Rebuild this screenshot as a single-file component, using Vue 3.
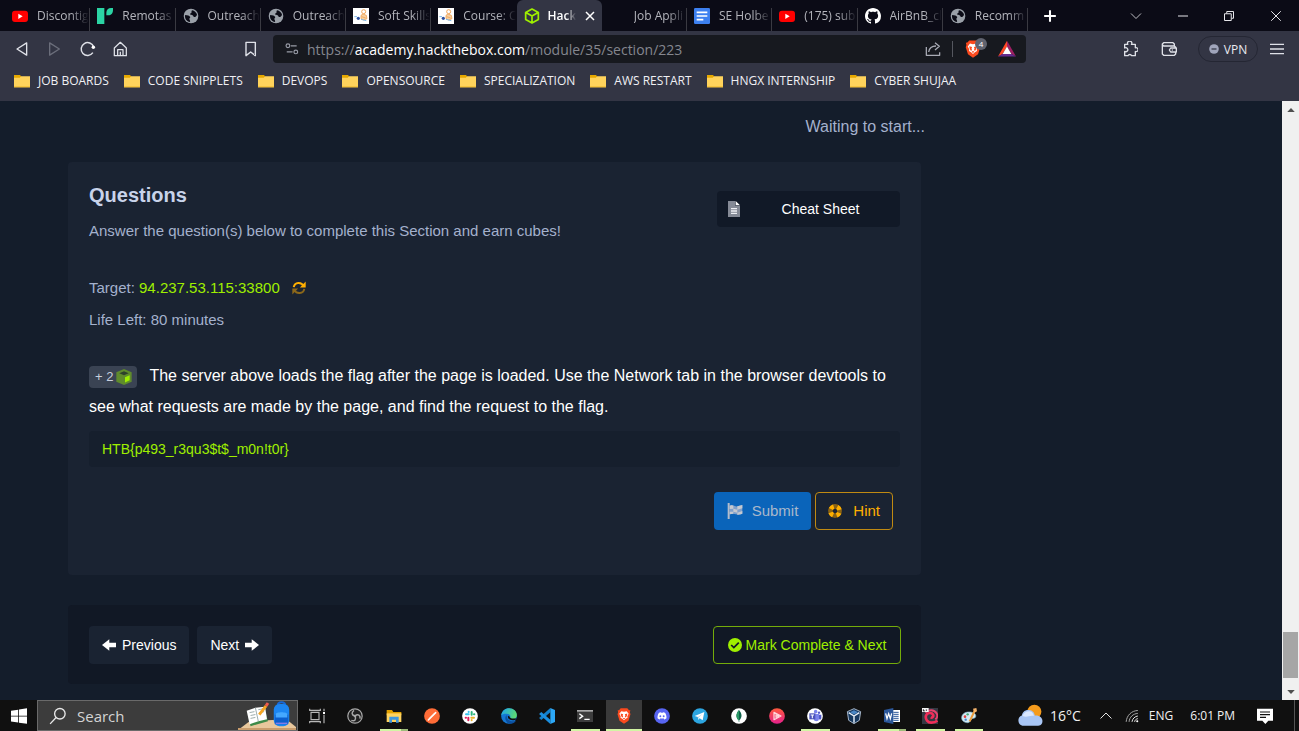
<script setup>
import { ref } from 'vue'

const tabs = [
  { icon: 'youtube', title: 'Discontig' },
  { icon: 'remotask', title: 'Remotas' },
  { icon: 'globe', title: 'Outreach' },
  { icon: 'globe', title: 'Outreach' },
  { icon: 'course', title: 'Soft Skills' },
  { icon: 'course', title: 'Course: C' },
  { icon: 'htb', title: 'Hack', active: true },
  { icon: '', title: 'Job Appli' },
  { icon: 'docs', title: 'SE Holbe' },
  { icon: 'youtube', title: '(175) sub' },
  { icon: 'github', title: 'AirBnB_cl' },
  { icon: 'globe', title: 'Recomm' }
]

const bookmarks = [
  'JOB BOARDS',
  'CODE SNIPPLETS',
  'DEVOPS',
  'OPENSOURCE',
  'SPECIALIZATION',
  'AWS RESTART',
  'HNGX INTERNSHIP',
  'CYBER SHUJAA'
]

const apps = [
  { name: 'Task View', icon: 'taskview' },
  { name: 'OBS', icon: 'obs' },
  { name: 'File Explorer', icon: 'explorer', open: true, stacked: true },
  { name: 'Postman', icon: 'postman' },
  { name: 'Slack', icon: 'slack' },
  { name: 'Edge', icon: 'edge' },
  { name: 'VS Code', icon: 'vscode' },
  { name: 'Terminal', icon: 'terminal', open: true },
  { name: 'Brave', icon: 'brave', open: true, focused: true },
  { name: 'Discord', icon: 'discord' },
  { name: 'Telegram', icon: 'telegram' },
  { name: 'MongoDB', icon: 'mongo' },
  { name: 'Player', icon: 'player' },
  { name: 'Teams', icon: 'teams', open: true },
  { name: 'VirtualBox', icon: 'vbox' },
  { name: 'Word', icon: 'word', open: true, stacked: true },
  { name: 'Debian', icon: 'debian', open: true },
  { name: 'Paint', icon: 'paint', open: true }
]

const flag = ref('HTB{p493_r3qu3$t$_m0n!t0r}')

// Every drawing sits on a 24 by 24 grid.
const icons = {
  youtube: '<rect y="4" width="24" height="17" rx="4.500" fill="#f00"/><path fill="#fff" d="M9.500 8.500v8l6.500-4z"/>',
  remotask: '<path fill="#2bd4a4" d="M0 0h11v24H0zM14 11V7c0-4 3-7 7-7h3v3c0 5-3 8-7 8z"/>',
  globe: '<circle cx="12" cy="12" r="11" fill="#9aa0a8"/><path fill="#0b0b16" d="M3.200 10.500c3.500.3 7 1.200 7.600 3 .5 1.500-1.600 1.700-1.200 3.500.2 1.500 1.400 1.400 1 4-5-.8-8.500-5-7.400-10.500zM13.500 3.200c4 .5 7 3.600 7.600 7.300-1.500 2-2.500 3.400-4.300 3-1.500-.3-1-2-2.400-2.600-1.600-.6-3 .2-3.600-1.500-.5-1.500 1.500-1.500 2-2.600.4-1-.6-2 .7-3.600z"/>',
  course: '<path fill="#fff" d="M0 0h24v24H0z"/><circle cx="16" cy="5.500" r="3" fill="none" stroke="#f2a65a" stroke-width="1.500"/><path d="M12 11l3-2 5 2 1 5-5 2-4-2zM13 13l6 2" fill="#f7d0a0" stroke="#f0a050" stroke-width="1.200"/><circle cx="8" cy="15.500" r="2.400" fill="#2c4f9e"/><path stroke="#7db8e8" stroke-width="1.500" d="M2 13h4M12 17l8 2"/>',
  htb: '<path fill="none" stroke="#9fef00" stroke-width="2.600" stroke-linejoin="round" d="M12 1.500l9.500 5.200v10.600L12 22.500l-9.500-5.200V6.700zM3.500 7.200L12 12l8.500-4.800M12 12v10"/>',
  docs: '<rect width="24" height="24" rx="2" fill="#3d80f0"/><path stroke="#fff" stroke-width="2.600" d="M4 6.500h16M4 12h16M4 17.500h10"/>',
  github: '<g transform="scale(1.500)"><path fill="#fff" d="M8 0C3.580 0 0 3.580 0 8c0 3.540 2.290 6.530 5.470 7.590.4.070.55-.17.55-.38 0-.19-.01-.82-.01-1.490-2.010.37-2.530-.49-2.690-.94-.09-.23-.48-.94-.82-1.130-.28-.15-.68-.52-.01-.53.63-.01 1.080.58 1.230.82.72 1.210 1.870.87 2.330.66.070-.52.28-.87.51-1.070-1.780-.2-3.640-.89-3.640-3.950 0-.87.31-1.590.82-2.150-.08-.2-.36-1.020.08-2.120 0 0 .67-.21 2.200.82.64-.18 1.320-.27 2-.27s1.360.09 2 .27c1.530-1.040 2.200-.82 2.200-.82.44 1.100.16 1.920.08 2.120.51.56.82 1.270.82 2.150 0 3.070-1.870 3.750-3.650 3.950.29.25.54.73.54 1.480 0 1.070-.01 1.930-.01 2.200 0 .21.15.46.55.38A8.010 8.010 0 0 0 16 8c0-4.420-3.580-8-8-8z"/></g>',
  close: '<path stroke="#fff" stroke-width="3" d="M4 4l16 16M20 4L4 20"/>',
  plus: '<path stroke="#fff" stroke-width="3.500" d="M12 2v20M2 12h20"/>',
  chevronDown: '<path fill="none" stroke="#d0d0d6" stroke-width="1.800" d="M2 7l10 10L22 7"/>',
  minimize: '<path stroke="#e6e6ea" stroke-width="2" d="M2 12h20"/>',
  restore: '<path fill="none" stroke="#e6e6ea" stroke-width="2" d="M3 7.500h13.500V21H3zM7.500 7V3H21v13.500h-4"/>',
  windowClose: '<path stroke="#e6e6ea" stroke-width="2" d="M2.500 2.500l19 19M21.500 2.500l-19 19"/>',
  back: '<path fill="none" stroke="#dfe1e8" stroke-width="2" stroke-linejoin="round" d="M4.500 12L19 2.800v18.400z"/>',
  forward: '<path fill="none" stroke="#6b6e7b" stroke-width="2" stroke-linejoin="round" d="M18.500 12L4 2.800v18.400z"/>',
  reload: '<path fill="none" stroke="#dfe1e8" stroke-width="2.200" d="M19.300 17.500A9.600 9.600 0 1 1 20.500 9"/><circle cx="20" cy="9.500" r="2.600" fill="#fff"/>',
  home: '<path fill="none" stroke="#dfe1e8" stroke-width="1.900" stroke-linejoin="round" d="M2 10.500l9-8.500 9 8.500V22H2zM7 22v-9h8v9M11 22v-6"/>',
  bookmark: '<path fill="none" stroke="#dfe1e8" stroke-width="2.100" stroke-linejoin="round" d="M4.500 2h14v20l-7-5.500-7 5.500z"/>',
  tune: '<g fill="none" stroke="#9a9da8" stroke-width="2"><circle cx="5" cy="6.500" r="3.200"/><path d="M10 6.500h10M3 17h10"/><circle cx="18.500" cy="17" r="3.200"/></g>',
  share: '<path fill="none" stroke="#a9abb5" stroke-width="1.900" stroke-linejoin="round" d="M2 9v12.500h20V17M5.500 16.500c1-6 5-9 11-9M15 2.500l6.500 5.500-6.500 5.500"/>',
  brave: '<path fill="#fb4a1e" d="M7 .5h10l2.500 2.800 2 .2-.7 3 .9 3-3 9.500L12 23.700 5.300 19l-3-9.500.9-3-.7-3 2-.2z"/><path fill="#fff" d="M8 4.800l4 .8 4-.8 3 3.700-2 3.700.3 2.300-2.800 1.800L12 18.500l-2.500-2.200-2.800-1.800.3-2.300-2-3.700z"/><path fill="#fb4a1e" d="M7 8.300l3.700.9-.7 2.300.9 2-1.900.7-1.400-2.500zM17 8.300l-3.700.9.7 2.300-.9 2 1.900.7 1.400-2.500zM12 14.700l1.800 1-1.800 1.500-1.800-1.500z"/>',
  bat: '<path fill="#ff4724" d="M12 1v8L6 18.500 0 22z"/><path fill="#9e1f63" d="M12 1l12 21-6-3.500L12 9z"/><path fill="#662d91" d="M0 22h24l-6-3.500H6z"/><path fill="#fff" d="M12 8.500l5.800 10H6.200z"/>',
  puzzle: '<path fill="none" stroke="#dfe1e8" stroke-width="2" stroke-linejoin="round" d="M4 5h4.800a3.200 3.200 0 1 1 5.400 0H20v5.200a3 3 0 1 1 0 5.600V22h-5.500a3 3 0 0 0-5.500 0H4v-6.500a3 3 0 1 0 0-5z"/>',
  wallet: '<path fill="none" stroke="#dfe1e8" stroke-width="2" stroke-linejoin="round" d="M20 7.500V4.500L18 2.500H4L2 4.500v15l2 2h16l2-2V17M2 5.500l2 2h16l2 2v1M14.500 10.500H23v6h-8.500l-2-3z"/><circle cx="17" cy="13.500" r="1" fill="#dfe1e8"/>',
  vpn: '<circle cx="12" cy="12" r="11.500" fill="#a0a5bb"/><path stroke="#333544" stroke-width="3" d="M6 12h12"/>',
  menu: '<path stroke="#dfe1e8" stroke-width="2.200" d="M0 4h24M0 12h24M0 20h24"/>',
  folder: '<path fill="#e6a800" d="M0 3h9l2.500 3H23v4H0z"/><path fill="#ffd35c" d="M0 7h8.500L11 5h13v16.500H0z"/><path fill="#f2bd30" d="M0 20h24v1.500H0z"/>',
  sheet: '<path fill="#858a96" d="M3 0h11v7h7v17H3z"/><path fill="#fff" d="M14.500 0L21 6.500h-6.500z"/><path stroke="#eef0f4" stroke-width="2" d="M7.500 11.500h9M7.500 15h9M7.500 18.500h9"/>',
  sync: '<path fill="none" stroke="#ffaf00" stroke-width="3.400" d="M3 10.500C4.500 1.500 16 1 20 8.500"/><path fill="#ffaf00" d="M23.500 1v10h-10z"/><path fill="none" stroke="#8c681a" stroke-width="3.400" d="M21 13.500C19.500 22.500 8 23 4 15.500"/><path fill="#8c681a" d="M.5 23V13h10z"/>',
  cube: '<path fill="#5f8b2c" d="M12 0l11.500 5v14L12 24 .5 19V5z"/><path fill="#2d412c" d="M12 3.500l7 2.800-7 2.900-7-2.900z"/><path fill="#9fef00" d="M13.500 12.500l7-3.200v7.500l-7 3.600z"/>',
  flag: '<path fill="#b4bccb" d="M1 0h3v24H1z"/><path fill="#7fa0cb" d="M4 4c4-3 8 2 12 1l7-2v13c-7 4-11-2-19 1z"/><path fill="#c5c9d0" d="M4 4c2-1 4-1 5.500 0v4.500L4 9zM9.500 8.500l6 1.500v4.500l-6-1.500zM15.500 5L23 3v5l-7.500 2zM4 13l5.500.2V16L4 17zM15.500 14.500L23 12v4l-7.500 2z"/>',
  ring: '<circle cx="12" cy="12" r="7.900" fill="none" stroke="#896214" stroke-width="7.800"/><circle cx="12" cy="12" r="7.900" fill="none" stroke="#ffaf00" stroke-width="7.800" stroke-dasharray="6.200 6.210" transform="rotate(22.500 12 12)"/>',
  left: '<path fill="#fff" d="M12.500 2v6H24v8H12.500v6L0 12z"/>',
  right: '<path fill="#fff" d="M11.500 2v6H0v8h11.500v6L24 12z"/>',
  check: '<circle cx="12" cy="12" r="12" fill="#9fef00"/><path fill="none" stroke="#111825" stroke-width="3" d="M5.500 12l4.500 4.500L18.500 8"/>',
  arrowUp: '<path fill="#505050" d="M12 7l9 10H3z"/>',
  arrowDown: '<path fill="#505050" d="M12 17l9-10H3z"/>',
  windows: '<path fill="#fff" d="M0 4l10.800-1.500v9H0zM12 2.300L24 .5v11H12zM0 12.700h10.800v9L0 20.200zM12 12.700h12v11l-12-1.700z"/>',
  search: '<circle cx="14.500" cy="9" r="7" fill="none" stroke="#e8e8e8" stroke-width="1.800"/><path stroke="#e8e8e8" stroke-width="1.800" d="M9.500 14L1.500 22.500"/>',
  taskview: '<g fill="none" stroke="#b8b8b8" stroke-width="1.700"><path d="M3 6.500h12v11H3zM1 1v2.500h16V1M1 23v-2.500h16V23M22.500 1v4M22.500 10v13"/></g><path fill="#fff" d="M21 6h3v3h-3z"/>',
  obs: '<circle cx="12" cy="12" r="10.800" fill="#202020" stroke="#a9a9a9" stroke-width="1.800"/><circle cx="12" cy="12" r="2" fill="#a9a9a9"/><path fill="none" stroke="#a9a9a9" stroke-width="2.200" d="M10.500 3.500c-4 3-4 7 1.500 8.500M19.500 16c1-5-3-8-7.500-4M6.500 18.500c5 2 8-1.500 5.500-6.500"/>',
  explorer: '<path fill="#e2a100" d="M1 3h8l2 3h12v5H1z"/><path fill="#ffd35f" d="M1 8h22v13H1z"/><path fill="#3e97df" d="M5 13h14v9h-4v-4.500H9V22H5z"/>',
  postman: '<circle cx="12" cy="12" r="11.800" fill="#ff6c37"/><path stroke="#fff" stroke-width="2.400" stroke-linecap="round" d="M6.500 18L17.500 7"/><path stroke="#ffd1bf" d="M7 15.500L15 8"/>',
  slack: '<circle cx="12" cy="12" r="11.800" fill="#fff"/><g stroke-width="3" stroke-linecap="round"><path stroke="#36c5f0" d="M6 9.500h4M10 5.500v.5"/><path stroke="#2eb67d" d="M14.500 6v4M18 9.500h.5"/><path stroke="#ecb22e" d="M14 14.500h4M14.500 18v.5"/><path stroke="#e01e5a" d="M9.500 14.500v4M5.500 14.500H6"/></g>',
  edge: '<defs><linearGradient id="edgeTop" x1="0" x2="1" y1=".3" y2=".6"><stop stop-color="#1fa8e8"/><stop offset="1" stop-color="#5fdc6c"/></linearGradient></defs><circle cx="12" cy="12" r="11.800" fill="#1477d4"/><path fill="url(#edgeTop)" d="M.3 11C1.500 4 6.500.2 12.200.2 19 .2 23.800 5 23.800 10.500c0 4-2.800 6-6 6-3 0-4.500-1-4-2.500.5-1 .5-4-3-5C7 8 2.500 8.500.3 11z"/><path fill="#0c4f9e" d="M8.500 10.500c-3.500 3-2.500 10.500 3.500 13 5 .8 8.500-1.500 10.500-4.500-6 2.500-15 0-14-8.500z"/><path fill="#111" d="M10.500 11.500c-1.200 4 2.500 7.500 9 6.800 2-.3 3-1.300 4-2.300 0-1-6 1-9-1-1.800-1.200-.7-2.500-4-3.500z"/>',
  vscode: '<path fill="#1380cc" d="M17 0v6.500L3.500 18 .5 15.500v-1z"/><path fill="#1b8fe0" d="M17 24v-6.500L3.500 6 .5 8.500v1z"/><path fill="#2ca8f7" d="M17 0l7 3v18l-7 3z"/>',
  terminal: '<path fill="#3d3d3d" d="M0 3h24v18H0z"/><path fill="#aaa" d="M0 3h24v2.500H0z"/><path fill="none" stroke="#fff" stroke-width="2" d="M3.500 8.500l5 3.700-5 3.700M11 17h8"/>',
  discord: '<circle cx="12" cy="12" r="11.800" fill="#5865f2"/><path fill="#fff" d="M7.500 7.200L10.300 6.300l.7 1h2l.7-1 2.800.9c1.800 2.500 2.500 5.500 2.200 8.200-1 .9-2.300 1.400-3.400 1.700l-1-1.700c-1.500.4-3.100.4-4.600 0l-1 1.700c-1.100-.3-2.400-.8-3.400-1.700-.3-2.700.4-5.700 2.200-8.200z"/><ellipse cx="9.500" cy="12.300" rx="1.400" ry="1.600" fill="#5865f2"/><ellipse cx="14.500" cy="12.300" rx="1.400" ry="1.600" fill="#5865f2"/>',
  telegram: '<circle cx="12" cy="12" r="11.800" fill="#2ca5e0"/><path fill="#fff" d="M4 12l14.500-6-2.500 12.500-4.500-3.200-2.200 2.300-.5-4z"/><path fill="#b8d8ea" d="M8.700 13.600L15.500 9l-4.800 5-1.400 3.500z"/>',
  mongo: '<circle cx="12" cy="12" r="11.800" fill="#fff"/><path fill="#10634b" d="M12 3c5 5.500 5 11.500.4 15.500V21h-.8v-2.500C7 14.500 7 8.500 12 3z"/><path fill="#2c9a67" d="M12 3v16C7 15 7 8.500 12 3z"/>',
  player: '<defs><linearGradient id="playerFill" x2="0" y2="1"><stop stop-color="#ff5a3c"/><stop offset="1" stop-color="#e4208c"/></linearGradient></defs><circle cx="12" cy="12" r="11.800" fill="url(#playerFill)"/><path fill="none" stroke="#ffd7dd" stroke-width="1.800" stroke-linejoin="round" d="M7.500 6.500v11L18 12zM10.500 10v4l4-2z"/>',
  teams: '<circle cx="12" cy="12" r="11.800" fill="#fff"/><circle cx="13" cy="5.500" r="2.700" fill="#7b83eb"/><circle cx="18" cy="7" r="1.800" fill="#5059c9"/><path fill="#7b83eb" d="M10 9h8v7c0 5-8 5-8 0z"/><path fill="#5059c9" d="M18 10h3.500v5c0 3-3.500 3-3.500 1z"/><path fill="#4b53bc" d="M3.500 8h9v9h-9z"/><path stroke="#fff" stroke-width="1.600" d="M5.500 10.500h5M8 10.500v5"/>',
  vbox: '<path fill="#17395f" stroke="#b9cbe0" stroke-width="1.300" d="M12 1l10 4.500-2 13L12 23.500 4 18.500 2 5.500z"/><path fill="none" stroke="#e6eef8" stroke-width="2.200" d="M4 7l8 5 8-5M12 12v10"/><path fill="#4a86c4" d="M12 3.500l6 2.700-6 3.500-6-3.500z"/>',
  word: '<path fill="#fff" d="M12 3h12v18H12z"/><path stroke="#2b579a" stroke-width="1.500" d="M14 6.500h8M14 9.500h8M14 12.500h8M14 15.500h8M14 18.500h8"/><path fill="#2b579a" d="M0 3l14-3v24L0 21z"/><path fill="none" stroke="#fff" stroke-width="1.900" d="M2.500 8l2 8L7 8.500 9.500 16l2-8"/>',
  debian: '<path fill="#343843" d="M0 0h24v24H0z"/><path fill="none" stroke="#f02d58" stroke-width="4" d="M13 14c2 1 5-1 3.500-4-2-4-9-3-10.500 1.500C4.500 17 9 22 14 22c4 0 7-1 9-3"/><path fill="none" stroke="#e9426c" stroke-width="3" d="M5 7c5-5 13-5 17 1 1.500 3 1 7-2 9"/><path fill="#f4f4f4" d="M0 0h10v6H0z"/><path stroke="#333" stroke-width="1.300" d="M2 2v2.500h2M6.500 2v2.500"/>',
  paint: '<path fill="#d7ecf5" stroke="#81b6cd" d="M12 6c6 0 11 2.500 10 7-.8 3-4 1.800-6 3.500-2 1.500-2 5.500-6 5.500-5 0-9.500-3-9-8 .4-5 5-8 11-8z"/><circle cx="6" cy="13" r="2" fill="#d44"/><circle cx="10" cy="9.500" r="1.800" fill="#4a7"/><circle cx="7" cy="17.500" r="1.800" fill="#48c"/><path stroke="#eb9c3c" stroke-width="3" d="M21 3l-8 17"/><path fill="#f5b46c" d="M18 1l5-1 1 5-4 2z"/>',
  weather: '<circle cx="16" cy="8" r="6.500" fill="#f59b1c"/><path fill="#a9c6f5" d="M5 21a5 5 0 0 1-.5-9.500C5 8 8 6 11 6.500c3.500.3 5 2.500 5.500 5 3.500-.5 7 1.500 7 5 0 3-2 4.500-5 4.500z"/><path fill="#dbe8ff" d="M5 12c1-3 3.500-4.500 6-4.500s4.500 2 4.500 4.500c-4-1-6 2-10.500 0z"/>',
  chevronUp: '<path fill="none" stroke="#e4e4e4" stroke-width="2" d="M1 17L12 6l11 11"/>',
  wifi: '<g fill="none" stroke="#a6a6a6" stroke-width="1.700"><path d="M2 22C3 11 11 3 22 2.500M7 22C7.500 14 14 8 22 7.500"/><path stroke="#e8e8e8" d="M12 22c.5-5 5-9.500 10-10M16.500 22c.5-3 2.500-5 5.500-5.500"/></g><circle cx="21" cy="21" r="1.800" fill="#fff"/>',
  notice: '<path fill="#fff" d="M0 1h24v18h-7l-4.500 5-4.500-5H0z"/><path stroke="#111" stroke-width="1.700" d="M4.500 6h15M4.500 10h15M4.500 14h9"/>'
}
</script>

<template>
  <div class="screen">
    <header class="browser">
      <div class="tabstrip">
        <nav class="tabs" aria-label="Tabs">
          <div v-for="(tab, i) in tabs" :key="i" class="tab" :class="{ active: tab.active, before: i === 5 }">
            <svg class="i16" viewBox="0 0 24 24" v-html="icons[tab.icon] || ''"></svg>
            <span class="tab-title">{{ tab.title }}</span>
            <button v-if="tab.active" class="bare" aria-label="Close tab">
              <svg class="i12" viewBox="0 0 24 24" v-html="icons.close"></svg>
            </button>
          </div>
        </nav>
        <div class="window-tools">
          <button class="bare" aria-label="New tab"><svg class="i14" viewBox="0 0 24 24" v-html="icons.plus"></svg></button>
          <div class="window-buttons">
            <button class="bare" aria-label="Search tabs"><svg class="i12" viewBox="0 0 24 24" v-html="icons.chevronDown"></svg></button>
            <button class="bare" aria-label="Minimize"><svg class="i12" viewBox="0 0 24 24" v-html="icons.minimize"></svg></button>
            <button class="bare" aria-label="Restore"><svg class="i12" viewBox="0 0 24 24" v-html="icons.restore"></svg></button>
            <button class="bare" aria-label="Close"><svg class="i12" viewBox="0 0 24 24" v-html="icons.windowClose"></svg></button>
          </div>
        </div>
      </div>

      <div class="toolbar">
        <div class="nav-buttons">
          <button class="bare" aria-label="Back"><svg class="i16" viewBox="0 0 24 24" v-html="icons.back"></svg></button>
          <button class="bare" aria-label="Forward"><svg class="i16" viewBox="0 0 24 24" v-html="icons.forward"></svg></button>
          <button class="bare" aria-label="Reload"><svg class="i16" viewBox="0 0 24 24" v-html="icons.reload"></svg></button>
          <button class="bare" aria-label="Home"><svg class="i16" viewBox="0 0 24 24" v-html="icons.home"></svg></button>
          <button class="bare mark" aria-label="Bookmark"><svg class="i16" viewBox="0 0 24 24" v-html="icons.bookmark"></svg></button>
        </div>
        <div class="address">
          <svg class="i14" viewBox="0 0 24 24" v-html="icons.tune"></svg>
          <a class="url" href="#">https://<b>academy.hackthebox.com</b>/module/35/section/223</a>
          <button class="bare" aria-label="Share"><svg class="i16" viewBox="0 0 24 24" v-html="icons.share"></svg></button>
          <span class="rule"></span>
          <button class="bare shields" aria-label="Shields">
            <svg class="i18" viewBox="0 0 24 24" v-html="icons.brave"></svg>
            <span class="count">4</span>
          </button>
          <button class="bare" aria-label="Rewards"><svg class="i18" viewBox="0 0 24 24" v-html="icons.bat"></svg></button>
        </div>
        <div class="side-buttons">
          <button class="bare" aria-label="Extensions"><svg class="i16" viewBox="0 0 24 24" v-html="icons.puzzle"></svg></button>
          <button class="bare" aria-label="Wallet"><svg class="i16" viewBox="0 0 24 24" v-html="icons.wallet"></svg></button>
          <button class="vpn"><svg class="i10" viewBox="0 0 24 24" v-html="icons.vpn"></svg>VPN</button>
          <button class="bare" aria-label="Menu"><svg class="i14" viewBox="0 0 24 24" v-html="icons.menu"></svg></button>
        </div>
      </div>

      <nav class="bookmarks" aria-label="Bookmarks">
        <a v-for="name in bookmarks" :key="name" href="#">
          <svg class="i16" viewBox="0 0 24 24" v-html="icons.folder"></svg>{{ name }}
        </a>
      </nav>
    </header>

    <div class="viewport">
      <main class="page">
        <p class="waiting">Waiting to start...</p>

        <section class="card">
          <div class="card-head">
            <div>
              <h2>Questions</h2>
              <p class="lead">Answer the question(s) below to complete this Section and earn cubes!</p>
            </div>
            <button class="cheat">
              <svg class="i16" viewBox="0 0 24 24" v-html="icons.sheet"></svg>
              <span>Cheat Sheet</span>
            </button>
          </div>

          <p class="target">
            <span>Target: <span class="green">94.237.53.115:33800</span></span>
            <button class="bare" aria-label="Reset target"><svg class="i14" viewBox="0 0 24 24" v-html="icons.sync"></svg></button>
          </p>
          <p class="life">Life Left: 80 minutes</p>

          <label class="question" for="answer">
            <span class="points">+ 2<svg class="i16" viewBox="0 0 24 24" v-html="icons.cube"></svg></span>The server above loads the flag after the page is loaded. Use the Network tab in the browser devtools to see what requests are made by the page, and find the request to the flag.
          </label>
          <input id="answer" v-model="flag" class="answer" type="text" spellcheck="false" />

          <div class="actions">
            <button class="submit"><svg class="i16" viewBox="0 0 24 24" v-html="icons.flag"></svg>Submit</button>
            <button class="hint"><svg class="i14" viewBox="0 0 24 24" v-html="icons.ring"></svg>Hint</button>
          </div>
        </section>

        <section class="pager">
          <a class="step" href="#"><svg class="i14" viewBox="0 0 24 24" v-html="icons.left"></svg>Previous</a>
          <a class="step" href="#">Next<svg class="i14" viewBox="0 0 24 24" v-html="icons.right"></svg></a>
          <button class="complete"><svg class="i14" viewBox="0 0 24 24" v-html="icons.check"></svg>Mark Complete &amp; Next</button>
        </section>
      </main>

      <div class="scrollbar" aria-hidden="true">
        <svg class="i10" viewBox="0 0 24 24" v-html="icons.arrowUp"></svg>
        <div class="track"><div class="thumb"></div></div>
        <svg class="i10" viewBox="0 0 24 24" v-html="icons.arrowDown"></svg>
      </div>
    </div>

    <footer class="taskbar">
      <button class="bare start" aria-label="Start"><svg class="i16" viewBox="0 0 24 24" v-html="icons.windows"></svg></button>
      <label class="search">
        <svg class="i18" viewBox="0 0 24 24" v-html="icons.search"></svg>
        <input type="text" placeholder="Search" aria-label="Search" />
        <svg class="scene" viewBox="0 0 60 30">
          <path fill="#e8c79c" d="M0 30L12 21l38-2 10 8v3z" />
          <path fill="#c99c6c" d="M0 28h60v2H0z" />
          <path fill="#3d8a48" d="M10 13l18-4 3 12-18 5z" />
          <path fill="#fff" d="M9 10l9-3 10-1 2 13-9 2-9 3z" />
          <path stroke="#9aa" stroke-width="1" d="M18 7l3 14M12 12l5-1M13 15l5-1M13 18l5-1M21 9l5-1M22 12l5-1" />
          <path stroke="#f5a623" stroke-width="3" d="M22 14l7-9" />
          <path stroke="#ef5b4c" stroke-width="3" d="M29 5l2-3" />
          <path fill="none" stroke="#1769d8" stroke-width="2" d="M41 5c0-5 8-5 8 0" />
          <rect x="37" y="3" width="16" height="23" rx="6" fill="#1c86f2" />
          <path fill="#0c5fce" d="M38 14h14v10H38z" />
          <path fill="#45a8ff" d="M39 14c0-3 12-3 12 0v3H39z" />
          <path stroke="#b889f0" stroke-width="1" d="M39 23h12" />
        </svg>
      </label>
      <div class="apps">
        <button
          v-for="app in apps"
          :key="app.name"
          class="bare app"
          :class="{ open: app.open, focused: app.focused, stacked: app.stacked }"
          :aria-label="app.name"
        >
          <svg class="i16" viewBox="0 0 24 24" v-html="icons[app.icon]"></svg>
        </button>
      </div>
      <div class="tray">
        <svg class="i26" viewBox="0 0 24 24" v-html="icons.weather"></svg>
        <span class="temp">16°C</span>
        <svg class="i12" viewBox="0 0 24 24" v-html="icons.chevronUp"></svg>
        <svg class="i14" viewBox="0 0 24 24" v-html="icons.wifi"></svg>
        <span class="lang">ENG</span>
        <time>6:01 PM</time>
        <svg class="i16" viewBox="0 0 24 24" v-html="icons.notice"></svg>
        <span class="desktop"></span>
      </div>
    </footer>
  </div>
</template>

<style>
body {
  margin: 0;
  background: #141d2b;
}
</style>

<style scoped>
.screen {
  display: flex;
  flex-direction: column;
  height: 100vh;
  overflow: hidden;
  font-family: 'Liberation Sans', Arial, sans-serif;
}
.screen * {
  box-sizing: border-box;
}
svg {
  display: block;
  flex: none;
}
.i10 { width: 10px; height: 10px; }
.i12 { width: 12px; height: 12px; }
.i14 { width: 14px; height: 14px; }
.i16 { width: 16px; height: 16px; }
.i18 { width: 18px; height: 18px; }
.i26 { width: 26px; height: 26px; }
button,
input {
  font: inherit;
}
p,
h2 {
  margin: 0;
}
a {
  color: inherit;
  text-decoration: none;
}
.bare {
  display: flex;
  align-items: center;
  justify-content: center;
  padding: 0;
  border: 0;
  background: none;
}

/* Browser frame */
.browser,
.taskbar {
  flex: none;
  font-family: 'Open Sans', 'Noto Sans', sans-serif;
}
.browser {
  background: #333544;
  color: #f0f0f4;
  font-size: 12px;
}
.tabstrip {
  display: flex;
  height: 31px;
  padding-left: 5px;
  background: #0b0b16;
}
.tabs {
  display: grid;
  grid-template-columns: repeat(12, 1fr);
  flex: 1;
  min-width: 0;
}
.tab {
  position: relative;
  display: flex;
  align-items: center;
  gap: 9px;
  min-width: 0;
  padding: 0 1px 0 7px;
  color: #b4b5bc;
}
.tab::after {
  content: '';
  position: absolute;
  right: 0;
  top: 8px;
  bottom: 0;
  width: 1px;
  background: #3a3a42;
}
.tab.active::after,
.tab.before::after {
  display: none;
}
.tab-title {
  flex: 1;
  min-width: 0;
  overflow: hidden;
  white-space: nowrap;
  mask-image: linear-gradient(to right, #000 65%, transparent);
}
.tab.active {
  gap: 8px;
  padding-right: 6px;
  border-radius: 6px 6px 0 0;
  background: #333544;
  color: #fff;
  font-weight: 600;
}
.window-tools {
  display: flex;
  flex: none;
  width: 271px;
  padding-left: 15px;
}
.window-buttons {
  display: flex;
  justify-content: space-between;
  margin-left: auto;
  width: 170px;
  padding: 0 17px 0 1px;
}
.toolbar {
  display: flex;
  align-items: center;
  height: 36px;
}
.nav-buttons,
.side-buttons {
  display: flex;
  align-items: center;
  flex: none;
  width: 273px;
}
.nav-buttons {
  gap: 17px;
  padding: 0 14px;
}
.mark {
  margin-left: auto;
}
.address {
  display: flex;
  align-items: center;
  flex: 1;
  height: 28px;
  padding: 0 10px 0 12px;
  border-radius: 4px;
  background: #17191f;
  color: #85878f;
  font-size: 14px;
}
.url {
  flex: 1;
  margin-left: 8px;
  white-space: nowrap;
}
.url b {
  color: #fff;
  font-weight: 400;
}
.rule {
  width: 1px;
  height: 16px;
  margin: 0 11px;
  background: #55575f;
}
.shields {
  position: relative;
  margin-right: 16px;
}
.count {
  position: absolute;
  left: 11px;
  top: -2px;
  width: 12px;
  height: 12px;
  border-radius: 6px;
  background: #60636f;
  color: #fff;
  font-size: 8px;
  line-height: 12px;
}
.side-buttons {
  justify-content: flex-end;
  padding-right: 15px;
}
.side-buttons .bare:first-child {
  margin-right: 23px;
}
.vpn {
  display: flex;
  align-items: center;
  justify-content: center;
  gap: 5px;
  width: 60px;
  height: 26px;
  margin: 0 12px 0 21px;
  padding: 0;
  border: 1px solid #242633;
  border-radius: 13px;
  background: none;
  color: #e9eaf0;
}
.bookmarks {
  display: flex;
  gap: 15px;
  height: 34px;
  padding: 0 14px 7px;
}
.bookmarks a {
  display: flex;
  align-items: center;
  gap: 8px;
  white-space: nowrap;
}

/* Lesson page */
.viewport {
  display: flex;
  flex: 1;
  min-height: 0;
  background: #141d2b;
}
.page {
  flex: 1;
  min-width: 0;
  overflow: hidden;
  padding: 16px 357px 0 68px;
  color: #a4b1cd;
  font-size: 15px;
  line-height: 24px;
}
.waiting {
  font-size: 16px;
  line-height: 20px;
  text-align: right;
}
.card,
.pager {
  margin-right: 4px;
  border-radius: 4px;
}
.card {
  margin-top: 25px;
  padding: 21px 21px 45px;
  background: #1a2332;
}
.card-head {
  display: flex;
  justify-content: space-between;
  align-items: flex-start;
}
h2 {
  color: #c8d3ea;
  font-size: 20px;
  line-height: 24px;
}
.lead {
  margin-top: 12px;
}
.cheat {
  display: flex;
  align-items: center;
  width: 183px;
  height: 36px;
  margin-top: 8px;
  padding: 0 9px;
  border: 0;
  border-radius: 4px;
  background: #111927;
  color: #fff;
  font-size: 14px;
}
.cheat span {
  flex: 1;
  padding-left: 8px;
}
.target {
  display: flex;
  align-items: center;
  gap: 12px;
  margin-top: 33px;
}
.green {
  color: #9fef00;
}
.life {
  margin-top: 8px;
}
.question {
  display: block;
  margin-top: 28px;
  color: #fff;
  font-size: 16px;
  line-height: 31px;
}
.points {
  display: inline-flex;
  align-items: center;
  gap: 3px;
  height: 22px;
  margin-right: 12px;
  padding: 0 5px 0 6px;
  border-radius: 4px;
  background: #3a4353;
  color: #c8d0de;
  font-size: 13px;
  line-height: 22px;
  vertical-align: middle;
}
.answer {
  display: block;
  width: 100%;
  height: 36px;
  margin-top: 9px;
  padding: 0 13px;
  border: 0;
  border-radius: 4px;
  background: #161f2d;
  color: #9fef00;
  font-size: 14px;
}
.actions {
  display: flex;
  justify-content: flex-end;
  gap: 4px;
  margin-top: 25px;
  padding-right: 7px;
}
.actions button,
.step,
.complete {
  display: flex;
  align-items: center;
  justify-content: center;
  height: 38px;
  padding: 0 12px;
  border: 1px solid transparent;
  border-radius: 4px;
}
.submit {
  gap: 9px;
  background: #0a64ba;
  color: #a9b8cb;
}
.actions .hint {
  gap: 11px;
  border-color: #c08a12;
  background: none;
  color: #ffaf00;
}
.pager {
  display: flex;
  gap: 8px;
  margin-top: 30px;
  padding: 21px 20px 20px 21px;
  background: #111825;
  font-size: 14px;
}
.step {
  gap: 6px;
  background: #1a2332;
  color: #fff;
}
.complete {
  gap: 4px;
  min-width: 188px;
  margin-left: auto;
  border-color: #74ab0a;
  background: none;
  color: #9fef00;
}
.scrollbar {
  display: flex;
  flex-direction: column;
  align-items: center;
  flex: none;
  width: 17px;
  padding: 4px 0 3px;
  background: #f0f0f0;
}
.track {
  display: flex;
  flex-direction: column;
  justify-content: flex-end;
  flex: 1;
  padding-bottom: 9px;
}
.thumb {
  width: 15px;
  height: 46px;
  background: #a6a6a6;
}

/* Desktop taskbar */
.taskbar {
  display: flex;
  height: 31px;
  background: #101010;
  color: #f2f2f2;
  font-size: 12px;
}
.start {
  width: 37px;
}
.search {
  display: flex;
  align-items: center;
  flex: none;
  width: 261px;
  padding-left: 11px;
  border: 1px solid #6a6a6a;
  background: #3c3c3c;
}
.search input {
  flex: 1;
  min-width: 0;
  padding: 0 10px;
  border: 0;
  background: none;
  font-size: 15px;
}
.search input::placeholder {
  color: #d4d4d4;
  opacity: 1;
}
.scene {
  width: 60px;
  height: 29px;
}
.apps {
  display: grid;
  grid-template-columns: repeat(18, 1fr);
  flex: 1;
}
.app {
  margin: 0 5px;
  border-top: 2px solid transparent;
  border-bottom: 2px solid transparent;
}
.app.open {
  border-bottom-color: #d2f5a4;
}
.app.stacked {
  border-image: linear-gradient(to right, #d2f5a4 72%, #9dbb7a 72%) 2;
  border-top: 0;
  padding-top: 2px;
  border-left: 0;
  border-right: 0;
}
.app.focused {
  margin: 0 1px;
  border-top-color: #3a3a3a;
  background: #3a3a3a;
}
.tray {
  display: flex;
  align-items: center;
  flex: none;
  width: 311px;
  padding-left: 29px;
}
.temp {
  margin: 0 19px 0 7px;
  font-size: 14px;
}
.tray .i14 {
  margin: 0 10px 0 13px;
}
time {
  margin: 0 22px 0 17px;
}
.desktop {
  width: 1px;
  height: 31px;
  margin: 0 4px 0 auto;
  background: #555;
}
</style>
